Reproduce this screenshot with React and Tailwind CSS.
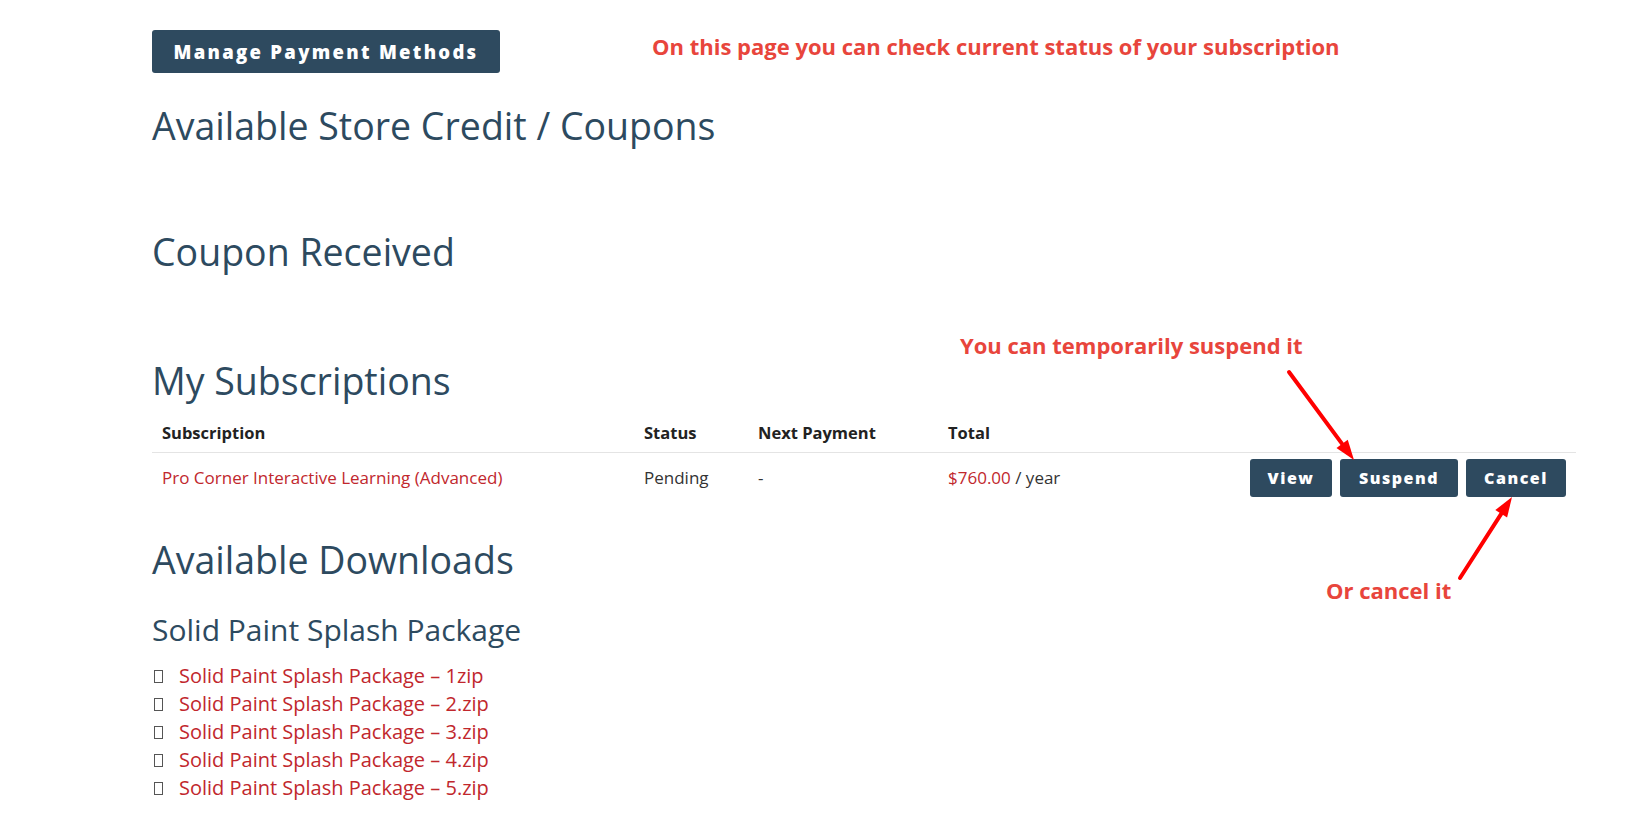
import React from "react";

const downloads = [
  "Solid Paint Splash Package – 1zip",
  "Solid Paint Splash Package – 2.zip",
  "Solid Paint Splash Package – 3.zip",
  "Solid Paint Splash Package – 4.zip",
  "Solid Paint Splash Package – 5.zip",
];

function DarkButton({ children, className = "" }) {
  return (
    <button
      type="button"
      className={`bg-[#2e4a5f] text-white font-extrabold rounded-[3px] ${className}`}
    >
      {children}
    </button>
  );
}

function Arrow({ x1, y1, x2, y2 }) {
  // arrow head at (x2, y2)
  const ang = Math.atan2(y2 - y1, x2 - x1);
  const len = 20;
  const w = 7;
  const bx = x2 - len * Math.cos(ang);
  const by = y2 - len * Math.sin(ang);
  const px = -Math.sin(ang) * w;
  const py = Math.cos(ang) * w;
  return (
    <g>
      <line x1={x1} y1={y1} x2={bx} y2={by} stroke="#ff0000" strokeWidth="4" strokeLinecap="round" />
      <polygon points={`${x2},${y2} ${bx + px},${by + py} ${bx - px},${by - py}`} fill="#ff0000" />
    </g>
  );
}

export default function App() {
  return (
    <div className="relative w-[1640px] h-[820px] overflow-hidden bg-white font-['Open_Sans',sans-serif]">
      <div className="ml-[152px] w-[1424px] pt-[30px]">
        <DarkButton className="h-[43px] w-[348px] text-[18.5px] tracking-[2.3px]">Manage Payment Methods</DarkButton>

        <h2 className="mt-[31px] text-[37.5px] leading-[44px] text-[#2d4a5f]">Available Store Credit / Coupons</h2>

        <h2 className="mt-[82px] text-[37.5px] leading-[44px] text-[#2d4a5f]">Coupon Received</h2>

        <h2 className="mt-[85px] text-[37.5px] leading-[44px] text-[#2d4a5f]">My Subscriptions</h2>

        {/* subscriptions table */}
        <div className="mt-[11px] text-[17px]">
          <div className="grid grid-cols-[482px_114px_190px_1fr] border-b border-[#e4e4e4] font-bold text-[#222] leading-[22px]">
            <div className="pl-[10px] py-[8px] text-[16.5px]">Subscription</div>
            <div className="pl-[10px] py-[8px] text-[16.5px]">Status</div>
            <div className="pl-[10px] py-[8px] text-[16.5px]">Next Payment</div>
            <div className="pl-[10px] py-[8px] text-[16.5px]">Total</div>
          </div>
          <div className="grid grid-cols-[482px_114px_190px_1fr_auto] items-center text-[#333] pt-[6px] pb-[8px]">
            <div className="pl-[10px] text-[#c1272d]">Pro Corner Interactive Learning (Advanced)</div>
            <div className="pl-[10px]">Pending</div>
            <div className="pl-[10px]">-</div>
            <div className="pl-[10px]">
              <span className="text-[#c1272d]">$760.00</span> / year
            </div>
            <div className="flex gap-[8px] pr-[10px]">
              <DarkButton className="h-[38px] w-[82px] text-[16px] tracking-[1.5px]">View</DarkButton>
              <DarkButton className="h-[38px] w-[118px] text-[16px] tracking-[1.5px]">Suspend</DarkButton>
              <DarkButton className="h-[38px] w-[100px] text-[16px] tracking-[1.5px]">Cancel</DarkButton>
            </div>
          </div>
        </div>

        <h2 className="mt-[33px] text-[37.5px] leading-[44px] text-[#2d4a5f]">Available Downloads</h2>

        <h3 className="mt-[30px] text-[30px] leading-[36px] text-[#2d4a5f]">Solid Paint Splash Package</h3>

        <ul className="mt-[14px] text-[20px] leading-[28px]">
          {downloads.map((d) => (
            <li key={d} className="flex items-center">
              <span className="inline-block w-[9px] h-[13px] border border-[#555] ml-[2px] mr-[16px]" />
              <a className="text-[#c1272d]">{d}</a>
            </li>
          ))}
        </ul>
      </div>

      {/* annotations */}
      <div className="absolute left-[652px] top-[32px] text-[22px] font-bold text-[#e8453c] leading-[28px]">
        On this page you can check current status of your subscription
      </div>
      <div className="absolute left-[960px] top-[331px] text-[22px] font-bold text-[#e8453c] leading-[28px]">
        You can temporarily suspend it
      </div>
      <div className="absolute left-[1326px] top-[576px] text-[22px] font-bold text-[#e8453c] leading-[28px]">
        Or cancel it
      </div>
      <svg className="absolute left-0 top-0 pointer-events-none" width="1640" height="820">
        <Arrow x1={1289} y1={372} x2={1354} y2={460} />
        <Arrow x1={1460} y1={578} x2={1512} y2={497} />
      </svg>
    </div>
  );
}
